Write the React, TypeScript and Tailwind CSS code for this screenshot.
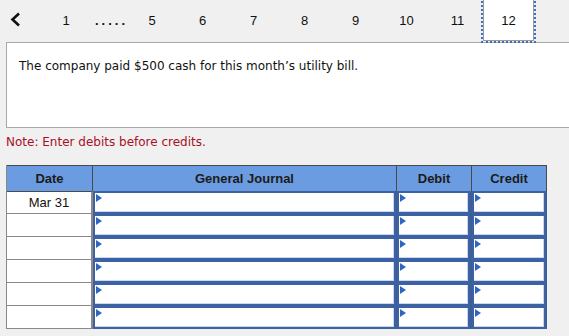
import React from "react";

const Flag = () => (
  <svg width="6" height="8" viewBox="0 0 6 8" className="absolute left-[1px] top-[1px]">
    <polygon points="0,0 6,4 0,8" fill="#2f66c0" />
  </svg>
);

const InputCell = () => (
  <div className="relative bg-white border-2 border-[#3d62a3] shadow-[inset_0_-1px_0_#c9d8ef,inset_-1px_0_0_#c9d8ef]">
    <Flag />
  </div>
);

export default function App() {
  const rows = ["Mar 31", "", "", "", "", ""];
  return (
    <div className="w-[569px] h-[336px] bg-[#f0f0f0] overflow-hidden" style={{ fontFamily: '"Liberation Sans", Arial, sans-serif' }}>
      {/* tab bar */}
      <div className="flex h-[42px] items-stretch text-[13px] text-[#111]">
        <div className="w-[44px] flex items-center pl-[10px] pb-[3px]">
          <svg width="11" height="15" viewBox="0 0 11 15">
            <polyline points="9,1.5 2.5,7.5 9,13.5" fill="none" stroke="#111" strokeWidth="2.6" />
          </svg>
        </div>
        <div className="w-[44px] flex items-center justify-center pb-[1px]">1</div>
        <div className="w-[44px] flex items-center justify-center pb-[1px] font-bold tracking-[3px] pl-[3px]">.....</div>
        <div className="w-[45px] pr-[5px] flex items-center justify-center pb-[1px]">5</div>
        {["6", "7", "8", "9", "10", "11"].map((n) => (
          <div key={n} className="w-[51px] flex items-center justify-center pb-[1px]">{n}</div>
        ))}
        <div className="w-[51px] h-[41px] self-start flex items-center justify-center pt-[1px] bg-white border-x border-b border-[#9a9a9a] outline-2 outline-dotted outline-[#3a6fc6]">
          12
        </div>
      </div>

      {/* question */}
      <div className="ml-[6px] w-[580px] h-[86px] bg-white border border-[#a9a9a9] pl-[12px] pt-[14px]">
        <p className="text-[12px] leading-[18px] text-[#111]" style={{ fontFamily: '"DejaVu Sans", Verdana, sans-serif' }}>
          The company paid $500 cash for this month’s utility bill.
        </p>
      </div>

      <p className="ml-[6px] mt-[6px] text-[12px] leading-[16px] text-[#a80f25]" style={{ fontFamily: '"DejaVu Sans", Verdana, sans-serif' }}>
        Note: Enter debits before credits.
      </p>

      {/* table */}
      <div className="ml-[6px] mt-[15px] w-[540px] grid grid-cols-[86px_304px_75px_75px] border-l border-[#888]">
        {["Date", "General Journal", "Debit", "Credit"].map((h) => (
          <div key={h} className="h-[26px] bg-[#6b9be0] border-t border-r border-[#4a4a4a] flex items-center justify-center font-bold text-[13px] text-[#1b1b1b]">
            {h}
          </div>
        ))}
        {rows.map((d, i) => (
          <React.Fragment key={i}>
            <div className="h-[23px] bg-white border-t border-[#4a4a4a] border-b border-b-[#8a8a8a] border-r-2 border-r-[#8a8a8a] flex items-center justify-center text-[13px] text-[#111]" style={{ borderTopColor: i === 0 ? "#4a4a4a" : "transparent", borderTopWidth: i === 0 ? 1 : 0 }}>
              {d}
            </div>
            <div className="h-[23px] bg-[#3d5f98] p-0 grid border-r border-[#3d5f98]">
              <InputCell />
            </div>
            <div className="h-[23px] bg-[#3d5f98] grid border-r-2 border-[#3d5f98]">
              <InputCell />
            </div>
            <div className="h-[23px] bg-[#3d5f98] grid border-r border-[#3d5f98]">
              <InputCell />
            </div>
          </React.Fragment>
        ))}
      </div>
    </div>
  );
}
